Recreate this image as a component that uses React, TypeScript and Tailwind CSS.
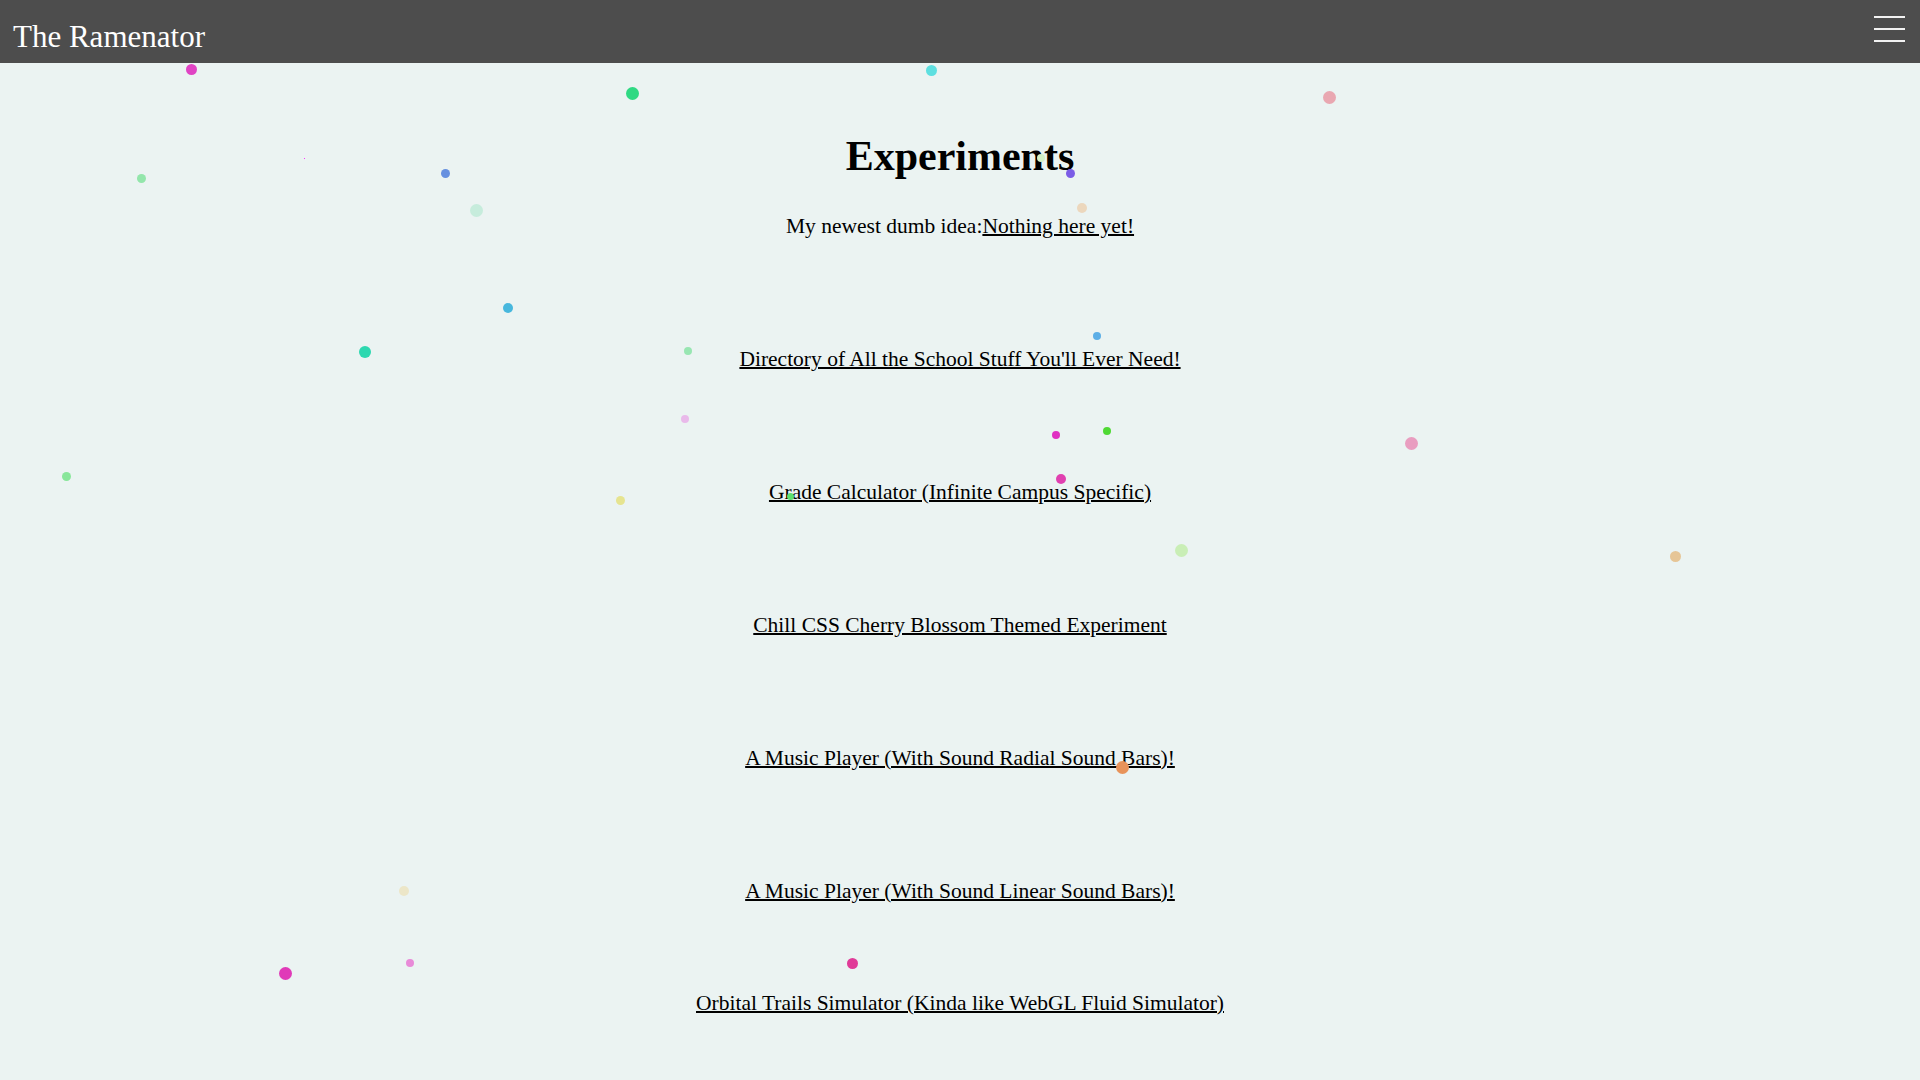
import React from 'react';

type Dot = { x: number; y: number; s: number; c: string };

// canvas particles, centre coordinates
const dots: Dot[] = [
  { x: 191, y: 69, s: 11, c: '#e043c4' },
  { x: 632, y: 93, s: 13, c: '#2fd983' },
  { x: 931, y: 70, s: 11, c: '#5ddfe0' },
  { x: 1329, y: 97, s: 13, c: '#e9a7b1' },
  { x: 141, y: 178, s: 9, c: '#93e6ab' },
  { x: 445, y: 173, s: 9, c: '#6690e0' },
  { x: 476, y: 210, s: 13, c: '#c6ecdc' },
  { x: 1070, y: 173, s: 9, c: '#7b5ce6' },
  { x: 1082, y: 208, s: 10, c: '#ecd7bd' },
  { x: 1041, y: 158, s: 8, c: '#d2f0c6' },
  { x: 508, y: 308, s: 10, c: '#47b7dd' },
  { x: 365, y: 352, s: 12, c: '#2dd8b0' },
  { x: 688, y: 351, s: 8, c: '#98e6b2' },
  { x: 1097, y: 336, s: 8, c: '#5caee6' },
  { x: 685, y: 419, s: 8, c: '#e9b9ea' },
  { x: 1056, y: 435, s: 8, c: '#e030c2' },
  { x: 1107, y: 431, s: 8, c: '#4fd934' },
  { x: 1061, y: 479, s: 10, c: '#e040b0' },
  { x: 1411, y: 443, s: 13, c: '#e99dc0' },
  { x: 66, y: 476, s: 9, c: '#88e69a' },
  { x: 620, y: 500, s: 9, c: '#e6e490' },
  { x: 790, y: 496, s: 7, c: '#5ee070' },
  { x: 1181, y: 550, s: 13, c: '#c9eeb6' },
  { x: 1675, y: 556, s: 11, c: '#e6c596' },
  { x: 1122, y: 767, s: 13, c: '#e8935a' },
  { x: 404, y: 891, s: 10, c: '#ece6c8' },
  { x: 285, y: 973, s: 13, c: '#e03ab8' },
  { x: 410, y: 963, s: 8, c: '#e88ad8' },
  { x: 852, y: 963, s: 11, c: '#e03a98' },
  { x: 304, y: 158, s: 1, c: '#ff00ff' },
];

const links = [
  'Directory of All the School Stuff You\'ll Ever Need!',
  'Grade Calculator (Infinite Campus Specific)',
  'Chill CSS Cherry Blossom Themed Experiment',
  'A Music Player (With Sound Radial Sound Bars)!',
  'A Music Player (With Sound Linear Sound Bars)!',
];

const serif = "font-['Liberation_Serif','DejaVu_Serif',serif]";

const App = () => {
  return (
    <div className={`relative min-h-screen overflow-hidden bg-[#ebf3f2] text-black ${serif}`}>
      {/* Navbar */}
      <header className="flex h-[63px] items-center justify-between bg-[#4d4d4d] pl-[13px] pr-[15px]">
        <a href="#" className="pt-[10px] text-[31px] leading-[36px] text-white">
          The Ramenator
        </a>
        <button className="flex w-[31px] flex-col gap-[10px] self-start pt-[16px]">
          <span className="block h-[2px] w-full bg-[#f2f2f2]" />
          <span className="block h-[2px] w-full bg-[#f2f2f2]" />
          <span className="block h-[2px] w-full bg-[#f2f2f2]" />
        </button>
      </header>

      {/* Main */}
      <main className="flex flex-col items-center">
        <h1 className="mt-[69px] text-[42px] font-bold leading-[48px]">Experiments</h1>
        <p className="mt-[32px] text-[21.5px] leading-[28px]">
          My newest dumb idea:
          <a href="#" className="underline decoration-2">Nothing here yet!</a>
        </p>

        <div className="mt-[105px] flex flex-col items-center gap-[105px]">
          {links.map((l) => (
            <a key={l} href="#" className="text-[21.5px] leading-[28px] underline decoration-2">
              {l}
            </a>
          ))}
        </div>

        <a href="#" className="mt-[84px] text-[21.5px] leading-[28px] underline decoration-2">
          Orbital Trails Simulator (Kinda like WebGL Fluid Simulator)
        </a>
      </main>

      {/* particle overlay */}
      <div className="pointer-events-none absolute inset-0">
        {dots.map((d, i) => (
          <span
            key={i}
            className="absolute rounded-full"
            style={{ left: d.x - d.s / 2, top: d.y - d.s / 2, width: d.s, height: d.s, background: d.c }}
          />
        ))}
      </div>
    </div>
  );
};

export default App;
